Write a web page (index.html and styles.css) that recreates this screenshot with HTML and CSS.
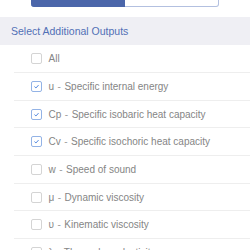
FILE: index.html
```
<!DOCTYPE html>
<html lang="en">
<head>
	<meta charset="UTF-8">
	<title>Select Additional Outputs</title>
	<link rel="stylesheet" href="styles.css">
</head>
<body>
<div class="seg">
	<span class="seg-item on">Metric</span>
	<span class="seg-item">Imperial</span>
</div>
<div class="head">Select Additional Outputs</div>
<ul class="list">
	<li><span class="box"></span>All</li>
	<li><span class="box on"><svg viewBox="0 0 11 11"><path d="M3 5.6 L4.8 7.3 L8 3.8"/></svg></span>u<span class="dash">-</span>Specific internal energy</li>
	<li><span class="box on"><svg viewBox="0 0 11 11"><path d="M3 5.6 L4.8 7.3 L8 3.8"/></svg></span>Cp<span class="dash">-</span>Specific isobaric heat capacity</li>
	<li><span class="box on"><svg viewBox="0 0 11 11"><path d="M3 5.6 L4.8 7.3 L8 3.8"/></svg></span>Cv<span class="dash">-</span>Specific isochoric heat capacity</li>
	<li><span class="box"></span>w<span class="dash">-</span>Speed of sound</li>
	<li><span class="box"></span>μ<span class="dash">-</span>Dynamic viscosity</li>
	<li><span class="box"></span>υ<span class="dash">-</span>Kinematic viscosity</li>
	<li><span class="box"></span>λ<span class="dash">-</span>Thermal conductivity</li>
</ul>
</body>
</html>
```

FILE: styles.css
```
*{
	margin: 0;
	padding: 0;
}
body{
	background: #fff;
	font-family: "Liberation Sans", Arial, sans-serif;
	overflow: hidden;
}
li{
	list-style: none;
}
.seg{
	display: flex;
	margin: -17px 31px 0;
	height: 24px;
}
.seg-item{
	flex: 1;
	font-size: 10px;
	line-height: 22px;
	text-align: center;
	color: #8a9cc8;
	border: 1px solid #b3c0e0;
	border-left: none;
	border-radius: 0 0 3px 0;
}
.seg-item.on{
	background: #4b66aa;
	border-color: #4b66aa;
	color: #fff;
	border-radius: 0 0 0 3px;
}
.head{
	margin-top: 10px;
	height: 28px;
	line-height: 28px;
	background: #efeff4;
	color: #5270b6;
	font-size: 10.5px;
	padding-left: 11px;
}
.list li{
	display: flex;
	align-items: center;
	height: 26.7px;
	margin-left: 14px;
	padding-left: 17px;
	border-bottom: 1px solid #eeeeee;
	font-size: 10px;
	color: #858585;
}
.list li:first-child{
	height: 27px;
}
.box{
	width: 11px;
	height: 11px;
	box-sizing: border-box;
	border: 1px solid #d4d4d4;
	border-radius: 2px;
	margin-right: 6.5px;
	flex: none;
	display: flex;
}
.box.on{
	border-color: #93b3e6;
}
.box svg{
	width: 9px;
	height: 9px;
}
.box path{
	fill: none;
	stroke: #4d84dd;
	stroke-width: 1.2;
}
.dash{
	padding: 0 3.5px;
	color: #a0a0a0;
}
```
